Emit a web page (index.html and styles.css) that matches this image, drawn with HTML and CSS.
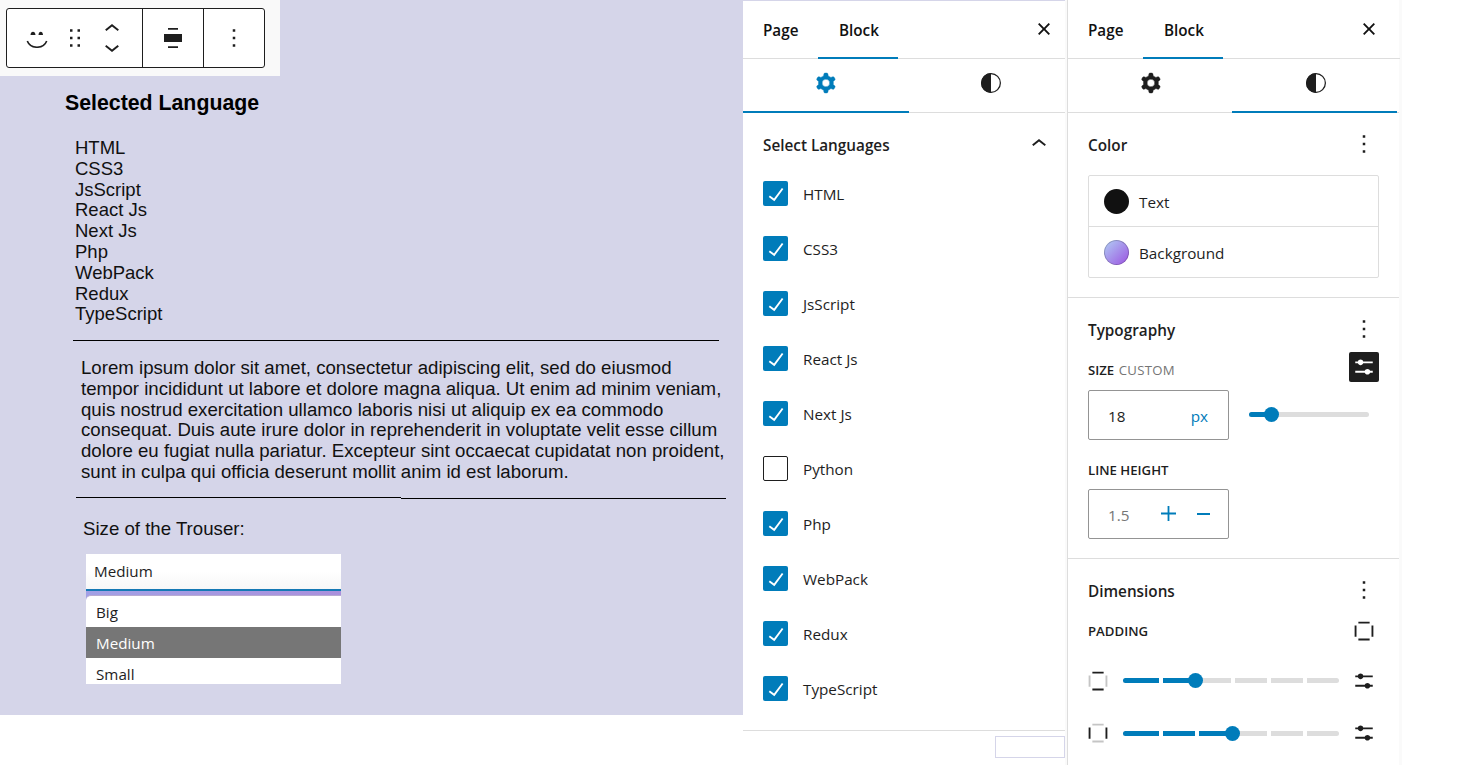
FILE: index.html
```html
<!DOCTYPE html>
<html lang="en">
<head>
<meta charset="utf-8">
<title>Block settings</title>
<link rel="stylesheet" href="styles.css">
</head>
<body>
<svg class="defs" width="0" height="0">
  <symbol id="cog" viewBox="0 0 24 24"><path fill-rule="evenodd" stroke="currentColor" stroke-width=".3" d="M10.289 4.836A1 1 0 0111.275 4h1.306a1 1 0 01.987.836l.244 1.466c.787.26 1.503.679 2.108 1.218l1.393-.522a1 1 0 011.216.437l.653 1.13a1 1 0 01-.23 1.273l-1.148.944a6.025 6.025 0 010 2.435l1.149.946a1 1 0 01.23 1.272l-.653 1.13a1 1 0 01-1.216.437l-1.394-.522c-.605.54-1.32.958-2.108 1.218l-.244 1.466a1 1 0 01-.987.836h-1.306a1 1 0 01-.986-.836l-.244-1.466a5.995 5.995 0 01-2.108-1.218l-1.394.522a1 1 0 01-1.217-.436l-.653-1.131a1 1 0 01.23-1.272l1.149-.946a6.026 6.026 0 010-2.435l-1.148-.944a1 1 0 01-.23-1.272l.653-1.131a1 1 0 011.217-.437l1.393.522a5.994 5.994 0 012.108-1.218l.244-1.466zM14.929 12a3 3 0 11-6 0 3 3 0 016 0z"/></symbol>
  <symbol id="styles" viewBox="0 0 24 24"><circle cx="12" cy="12" r="7.5" fill="none" stroke="currentColor"/><path d="M12 4a8 8 0 000 16z"/></symbol>
  <symbol id="close" viewBox="0 0 24 24"><path d="M12 13.06l3.712 3.713 1.061-1.06L13.061 12l3.712-3.712-1.06-1.06L12 10.938 8.288 7.227l-1.061 1.06L10.939 12l-3.712 3.712 1.06 1.061L12 13.061z"/></symbol>
  <symbol id="more" viewBox="0 0 24 24"><path d="M13 19h-2v-2h2v2zm0-6h-2v-2h2v2zm0-6h-2V5h2v2z"/></symbol>
  <symbol id="up" viewBox="0 0 24 24"><path d="M6.5 12.4L12 8l5.5 4.4-.9 1.2L12 10l-4.5 3.6-1-1.2z"/></symbol>
  <symbol id="down" viewBox="0 0 24 24"><path d="M17.5 11.6L12 16l-5.5-4.4.9-1.2L12 14l4.5-3.6 1 1.2z"/></symbol>
  <symbol id="check" viewBox="0 0 24 24"><path d="M16.7 7.1l-6.3 8.5-3.3-2.5-.9 1.2 4.5 3.4L17.9 8z"/></symbol>
  <symbol id="sliders" viewBox="0 0 24 24"><path d="M19 7.5h-7.628c-.309-.874-1.142-1.5-2.122-1.5s-1.813.626-2.122 1.5H5V9h2.128c.309.874 1.142 1.5 2.122 1.5s1.813-.626 2.122-1.5H19zM19 15h-2.128c-.309-.874-1.142-1.5-2.122-1.5s-1.813.626-2.122 1.5H5v1.5h7.628c.309.874 1.142 1.5 2.122 1.5s1.813-.626 2.122-1.5H19z"/></symbol>
  <symbol id="side-y" viewBox="0 0 24 24"><path d="M7.5 6h9V4.500h-9zM7.500 19.500h9V18h-9z"/></symbol>
  <symbol id="side-x" viewBox="0 0 24 24"><path d="M4.500 7.500H6v9H4.500zM18 7.500h1.500v9H18z"/></symbol>
</svg>

<main class="screen">
  <section class="canvas">
    <div class="toolbar-area">
      <div class="toolbar">
        <div class="tool-group main-tools">
          <svg class="smile" viewBox="0 0 22 20"><path d="M4.500 7C4.500 2.500 9.500 2.500 9.500 7zM12.500 7C12.500 2.500 17 2.500 17 7z"/><path d="M1.300 13C4.500 21.300 17.500 21.300 20.700 13" fill="none" stroke="currentColor" stroke-width="1.600"/></svg>
          <svg class="icon drag" viewBox="0 0 24 24"><path d="M8 7h2V5H8v2zm0 6h2v-2H8v2zm0 6h2v-2H8v2zm6-14v2h2V5h-2zm0 8h2v-2h-2v2zm0 6h2v-2h-2v2z"/></svg>
          <div class="movers"><svg class="icon"><use href="#up"/></svg><svg class="icon"><use href="#down"/></svg></div>
        </div>
        <div class="tool-group"><svg class="align" viewBox="0 0 18 20"><path d="M4 0h10v1.800H4zM0 6h18v8H0zM4 18.200h10V20H4z"/></svg></div>
        <div class="tool-group"><svg class="icon"><use href="#more"/></svg></div>
      </div>
    </div>
    <h1>Selected Language</h1>
    <ul class="chosen">
      <li>HTML</li><li>CSS3</li><li>JsScript</li><li>React Js</li><li>Next Js</li><li>Php</li><li>WebPack</li><li>Redux</li><li>TypeScript</li>
    </ul>
    <hr class="rule">
    <p class="lorem">Lorem ipsum dolor sit amet, consectetur adipiscing elit, sed do eiusmod<br>tempor incididunt ut labore et dolore magna aliqua. Ut enim ad minim veniam,<br>quis nostrud exercitation ullamco laboris nisi ut aliquip ex ea commodo<br>consequat. Duis aute irure dolor in reprehenderit in voluptate velit esse cillum<br>dolore eu fugiat nulla pariatur. Excepteur sint occaecat cupidatat non proident,<br>sunt in culpa qui officia deserunt mollit anim id est laborum.</p>
    <div class="split-rule"><span></span><span></span></div>
    <p class="size-label">Size of the Trouser:</p>
    <div class="select">
      <div class="select-value">Medium</div>
      <div class="options">
        <div class="list"><div>Big</div><div class="selected">Medium</div><div>Small</div></div>
      </div>
    </div>
  </section>

  <section class="panel languages">
    <header class="tabs"><b>Page</b><b class="on">Block</b><svg class="icon"><use href="#close"/></svg></header>
    <nav class="views"><span class="active"><svg class="icon"><use href="#cog"/></svg></span><span><svg class="icon"><use href="#styles"/></svg></span></nav>
    <div class="section-head"><h2>Select Languages</h2><svg class="icon chevron"><use href="#up"/></svg></div>
    <div class="checks">
      <div class="check"><i><svg><use href="#check"/></svg></i><span>HTML</span></div>
      <div class="check"><i><svg><use href="#check"/></svg></i><span>CSS3</span></div>
      <div class="check"><i><svg><use href="#check"/></svg></i><span>JsScript</span></div>
      <div class="check"><i><svg><use href="#check"/></svg></i><span>React Js</span></div>
      <div class="check"><i><svg><use href="#check"/></svg></i><span>Next Js</span></div>
      <div class="check"><i class="off"></i><span>Python</span></div>
      <div class="check"><i><svg><use href="#check"/></svg></i><span>Php</span></div>
      <div class="check"><i><svg><use href="#check"/></svg></i><span>WebPack</span></div>
      <div class="check"><i><svg><use href="#check"/></svg></i><span>Redux</span></div>
      <div class="check"><i><svg><use href="#check"/></svg></i><span>TypeScript</span></div>
    </div>
    <div class="corner-box"></div>
  </section>

  <section class="panel appearance">
    <header class="tabs"><b>Page</b><b class="on">Block</b><svg class="icon"><use href="#close"/></svg></header>
    <nav class="views"><span><svg class="icon"><use href="#cog"/></svg></span><span class="active"><svg class="icon"><use href="#styles"/></svg></span></nav>
    <div class="group color-group">
      <div class="section-head"><h2>Color</h2><svg class="icon"><use href="#more"/></svg></div>
      <div class="colors">
        <div><i class="swatch"></i>Text</div>
        <div><i class="swatch gradient"></i>Background</div>
      </div>
    </div>
    <div class="group type-group">
      <div class="section-head"><h2>Typography</h2><svg class="icon"><use href="#more"/></svg></div>
      <div class="label-row"><h3>SIZE <span>CUSTOM</span></h3><div class="dark-button"><svg class="icon"><use href="#sliders"/></svg></div></div>
      <div class="size-row">
        <div class="field"><span>18</span><em>px</em></div>
        <div class="range"><div class="fill"></div><div class="thumb"></div></div>
      </div>
      <h3 class="line-height">LINE HEIGHT</h3>
      <div class="field stepper"><span>1.5</span><svg viewBox="0 0 50 16"><path d="M0 7.500h15M7.500 0v15M36 8h13" fill="none" stroke="currentColor" stroke-width="1.800"/></svg></div>
    </div>
    <div class="group">
      <div class="section-head"><h2>Dimensions</h2><svg class="icon"><use href="#more"/></svg></div>
      <div class="padding-head"><h3>PADDING</h3><svg class="icon"><use href="#side-x"/><use href="#side-y"/></svg></div>
      <div class="padding-row first">
        <svg class="icon"><use href="#side-x" opacity=".25"/><use href="#side-y"/></svg>
        <div class="range steps"><div class="fill" style="width:72px"></div><div class="ticks"><s></s><s></s><s></s><s></s><s></s><s class="end"></s></div><div class="thumb" style="left:64.500px"></div></div>
        <svg class="icon"><use href="#sliders"/></svg>
      </div>
      <div class="padding-row">
        <svg class="icon"><use href="#side-x"/><use href="#side-y" opacity=".25"/></svg>
        <div class="range steps"><div class="fill" style="width:108px"></div><div class="ticks"><s></s><s></s><s></s><s></s><s></s><s class="end"></s></div><div class="thumb" style="left:101.500px"></div></div>
        <svg class="icon"><use href="#sliders"/></svg>
      </div>
    </div>
  </section>
  <div class="edge"></div>
</main>
</body>
</html>
```
FILE: styles.css
```css
* { box-sizing: border-box; }
body { margin: 0; background: #fff; overflow: hidden; }
h1, h2, h3, p, ul { margin: 0; padding: 0; }
.defs { position: absolute; }
svg { display: block; flex: none; fill: currentColor; }
.icon { width: 30px; height: 30px; }
.screen { display: flex; align-items: flex-start; width: 1481px; height: 773px; color: #1e1e1e; font: 15.250px/22px "Open Sans", "Noto Sans", sans-serif; }

/* Editor canvas */
.canvas { width: 743px; height: 715px; background: #d5d5e9; color: #111; font: 18.650px/20.800px "Liberation Sans", Arial, sans-serif; }
.toolbar-area { width: 280px; height: 76px; padding: 8px 0 0 6px; background: #f9f9f9; }
.toolbar { display: flex; width: 259px; height: 60px; border: 1px solid #1e1e1e; border-radius: 3px; background: #fff; color: #1e1e1e; }
.tool-group { flex: 1; display: flex; align-items: center; justify-content: center; border-left: 1px solid #1e1e1e; }
.main-tools { flex: 0 0 135px; border-left: 0; justify-content: flex-start; padding-left: 19px; }
.smile { width: 22px; height: 20px; }
.drag { margin-left: 12px; }
.movers { margin-left: 7px; height: 48px; display: flex; flex-direction: column; justify-content: space-between; }
.movers .icon + .icon { margin-top: -12px; }
.align { width: 18px; height: 20px; }
.canvas h1 { margin: 14px 0 0 65px; color: #000; font-size: 21.3px; line-height: 26px; }
.chosen { list-style: none; margin: 22px 0 0 75px; height: 188px; font-size: 18.500px; }
.rule { width: 646px; height: 1px; margin: 14px 0 0 73px; border: 0; background: #000; }
.lorem { margin: 17px 0 0 81px; white-space: nowrap; height: 125px; }
.split-rule { display: flex; width: 650px; height: 2px; margin: 14px 0 0 76px; }
.split-rule span { width: 325px; height: 1px; background: #000; }
.split-rule span + span { margin-top: 1px; }
.size-label { margin: 20px 0 0 83px; }
.select { width: 255px; height: 130px; margin: 14px 0 0 86px; overflow: hidden; font: 15.2px/31px "Open Sans", "Noto Sans", sans-serif; color: #1e1e1e; }
.select-value { height: 37px; padding-left: 8px; line-height: 35px; border-bottom: 2px solid #1579b5; background: linear-gradient(#fff 50%, #f7f7f7); }
.options { height: 93px; padding-top: 4px; background: linear-gradient(90deg, #a2a0e5, #aa90dc); }
.list { height: 89px; overflow: hidden; border-top: 1px solid #b8abd2; border-radius: 5px 0 0 0; background: #fff; }
.list div { height: 31px; padding-left: 10px; line-height: 32px; }
.list .selected { background: #767676; color: #fff; }

/* Sidebars */
.panel { position: relative; flex: none; }
.languages { width: 322px; height: 765px; border-top: 1px solid #d5d5e9; }
.appearance { width: 334px; height: 765px; margin-left: 2px; border-left: 1px solid #ddd; box-shadow: -2px 0 0 #fafafa; }
.tabs { height: 59px; padding: 0 6px 0 20px; display: flex; align-items: center; border-bottom: 1px solid #ddd; color: #111; }
.languages .tabs { height: 58px; }
.tabs b { font-weight: 600; align-self: stretch; line-height: 61px; }
.languages .tabs b { line-height: 59px; }
.tabs .on { width: 80px; margin: 0 0 -1px 19.500px; padding-left: 21px; border-bottom: 2px solid #007cba; }
.tabs .icon { margin: 0 0 1px auto; }
.appearance .tabs { width: 332px; padding-right: 16px; }
.views { display: grid; grid-template-columns: 166px 1fr; height: 54px; border-bottom: 1px solid #ddd; }
.appearance .views { grid-template-columns: 164px 165px; width: 331px; }
.views span { display: flex; justify-content: center; padding-top: 9px; margin-bottom: -1px; }
.languages .views span + span { padding-left: 8px; }
.appearance .views span { padding-left: 2px; }
.views .active { border-bottom: 2px solid #007cba; }
.languages .active { color: #007cba; }
.section-head { display: flex; align-items: center; justify-content: space-between; height: 30px; padding-right: 20px; }
h2 { font-size: 15.3px; font-weight: 600; line-height: 30px; }
.appearance h2 { padding-top: 2px; }
h3 { font-size: 13.2px; font-weight: 600; line-height: 20px; }
h3 span { color: #757575; font-weight: 500; letter-spacing: .3px; margin-left: 1px; }
.languages .section-head { padding: 0 11px 0 20px; margin-top: 17px; }
.languages .chevron { margin-top: -2px; }
.checks { display: grid; gap: 30px; padding: 21px 0 0 20px; height: 571px; align-content: start; border-bottom: 1px solid #ddd; }
.check { display: flex; gap: 15px; height: 25px; line-height: 27px; }
.check i { width: 25px; height: 25px; border-radius: 2px; background: #007cba; color: #fff; }
.check svg { width: 30px; height: 30px; margin: -2px -2.500px; }
.check .off { border: 1px solid #1e1e1e; background: #fff; }
.corner-box { width: 70px; height: 22px; margin: 5px 0 0 auto; border: 1px solid #d5d5e9; }

.group { width: 331px; padding: 16px 0 0 20px; border-bottom: 1px solid #ddd; }
.group:last-child { border: 0; }
.color-group { height: 185px; }
.colors { width: 291px; height: 103px; margin-top: 16px; border: 1px solid #ddd; border-radius: 2px; }
.colors > div { display: flex; align-items: center; gap: 10px; height: 50px; padding: 2px 0 0 15px; }
.colors > div:first-child { height: 51px; border-bottom: 1px solid #ddd; }
.swatch { width: 25px; height: 25px; margin-top: -1px; border-radius: 50%; background: #111; }
.gradient { background: linear-gradient(135deg, #b1d0f5, #9b51e0); box-shadow: inset 0 0 0 1px #0003; }
.type-group { height: 261px; }
.label-row { display: flex; align-items: center; justify-content: space-between; height: 30px; margin-top: 8px; padding-right: 20px; }
.label-row h3 { margin-top: 5px; }
.dark-button { background: #1e1e1e; color: #fff; border-radius: 2px; }
.size-row { display: flex; align-items: center; gap: 20px; margin-top: 8px; }
.field { display: flex; align-items: center; justify-content: space-between; width: 141px; height: 50px; padding: 2px 20px 0 19px; border: 1px solid #949494; border-radius: 2px; }
.field em { font-style: normal; color: #007cba; }
.range { position: relative; width: 120px; height: 5px; border-radius: 3px; background: #ddd; }
.size-row .range { margin-bottom: 1px; }
.fill { width: 24px; height: 5px; border-radius: 3px; background: #007cba; }
.thumb { position: absolute; left: 14.500px; top: -5px; width: 15px; height: 15px; border-radius: 50%; background: #007cba; }
.line-height { margin-top: 20px; }
.stepper { margin-top: 9px; color: #757575; }
.stepper svg { width: 50px; height: 16px; margin: -3px -3px 0 0; color: #007cba; }
.padding-head { display: flex; align-items: center; justify-content: space-between; height: 30px; margin-top: 11px; padding-right: 20px; }
.padding-row { display: flex; align-items: center; height: 30px; margin: 20px 0 22px -5px; }
.padding-row .range { margin: 0 10px; }
.first .range { margin-bottom: 1px; }
.padding-row .steps { width: 216px; }
.ticks { position: absolute; inset: 0; display: grid; grid-template-columns: repeat(6, 36px); }
.ticks s { width: 4px; height: 5px; margin-left: 36px; background: #fff; }
.ticks .end { visibility: hidden; }
.edge { width: 3px; height: 765px; margin-left: -2px; background: #fafafa; }
```
